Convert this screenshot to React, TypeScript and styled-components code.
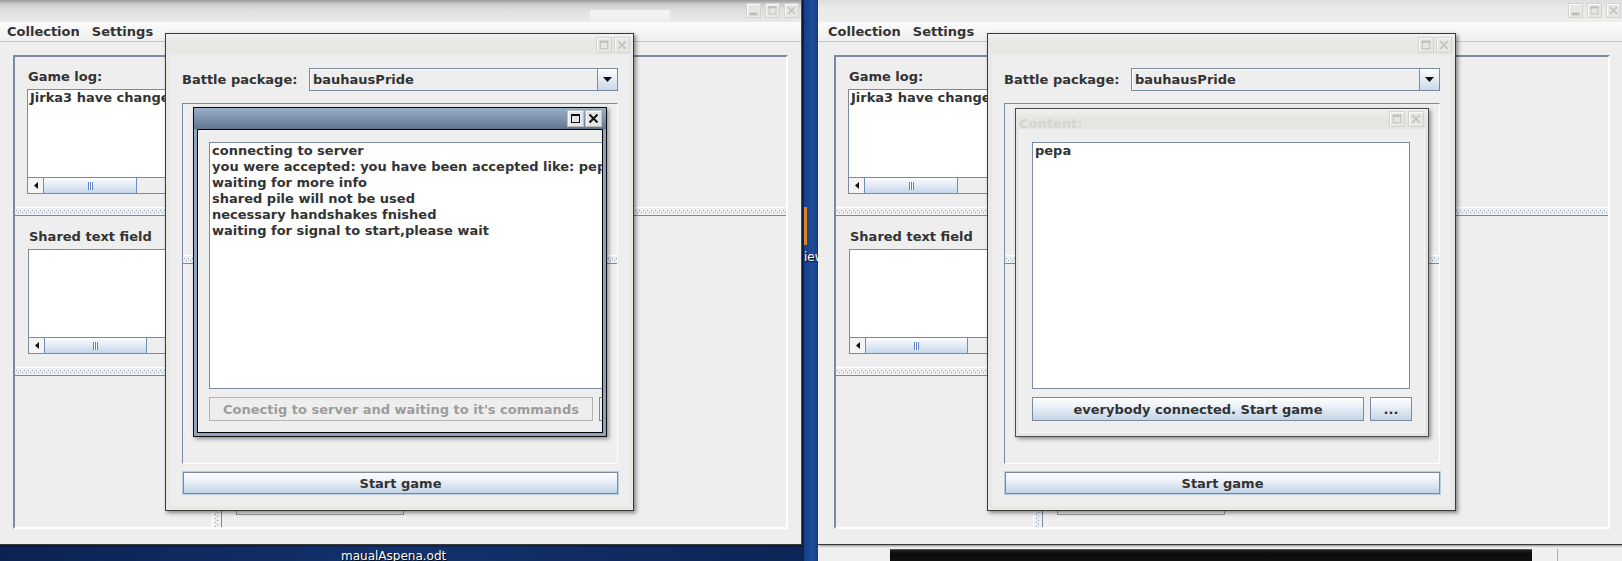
import React from "react";
import styled, { createGlobalStyle } from "styled-components";

const GlobalStyle = createGlobalStyle`
  html, body { margin: 0; padding: 0; }
  body {
    width: 1622px;
    height: 561px;
    overflow: hidden;
    background: #0f2a5e;
    font-family: "DejaVu Sans", "Liberation Sans", sans-serif;
    font-size: 13px;
    font-weight: bold;
    color: #333333;
  }
`;

type Glyph = "min" | "max" | "close";
type Tone = "ghost" | "solid";

const TitleButton: React.FC<{ kind: Glyph; tone: Tone; size: number }> = ({ kind, tone, size }) => {
  const c = tone === "ghost" ? "#bcbcb8" : "#111111";
  return (
    <TitleBtnBox $tone={tone} $size={size}>
      <svg width={size - 2} height={size - 2} viewBox="0 0 15 15">
        {kind === "min" && <rect x="3" y="10" width="9" height="3" fill={c} />}
        {kind === "max" && (
          <>
            <rect x="3.5" y="3.5" width="8" height="8" fill="none" stroke={c} strokeWidth="1" />
            <rect x="3" y="3" width="9" height="2" fill={c} />
          </>
        )}
        {kind === "close" && (
          <path d="M3.5 3.5 L11.5 11.5 M11.5 3.5 L3.5 11.5" stroke={c} strokeWidth={tone === "ghost" ? 1.5 : 2} />
        )}
      </svg>
    </TitleBtnBox>
  );
};

const Scrollbar: React.FC<{ thumb: number }> = ({ thumb }) => (
  <ScrollTrack>
    <ScrollArrow>
      <svg width="4" height="7" viewBox="0 0 4 7">
        <polygon points="4,0 0,3.5 4,7" fill="#111" />
      </svg>
    </ScrollArrow>
    <ScrollThumb style={{ width: thumb }}>
      <Grip />
    </ScrollThumb>
  </ScrollTrack>
);

const BattleDialog: React.FC<{ left: number; children: React.ReactNode }> = ({ left, children }) => (
  <Dialog style={{ left }}>
    <DialogTitle>
      <TitleButton kind="max" tone="ghost" size={16} />
      <TitleButton kind="close" tone="ghost" size={16} />
    </DialogTitle>
    <DialogBody>
      <ComboRow>
        <FieldLabel>Battle package:</FieldLabel>
        <Combo>
          <ComboValue>bauhausPride</ComboValue>
          <ComboArrow>
            <svg width="9" height="5" viewBox="0 0 9 5">
              <polygon points="0,0 9,0 4.5,5" fill="#111" />
            </svg>
          </ComboArrow>
        </Combo>
      </ComboRow>
      <DeskPane>
        <DeskTopPart />
        <HDivider />
        <DeskBottomPart />
        {children}
      </DeskPane>
      <WideButton>Start game</WideButton>
    </DialogBody>
  </Dialog>
);

const AppWindow: React.FC<{
  shift: number;
  width: number;
  tone: "dim" | "light";
  ghostTab?: boolean;
  children: React.ReactNode;
}> = ({ shift, width, tone, ghostTab, children }) => (
  <Window style={{ marginLeft: shift, width }}>
    <TitleBar $tone={tone}>
      {ghostTab && <GhostTab />}
      <TitleButton kind="min" tone="ghost" size={15} />
      <TitleButton kind="max" tone="ghost" size={15} />
      <TitleButton kind="close" tone="ghost" size={15} />
    </TitleBar>
    <MenuBar>
      <MenuItem>Collection</MenuItem>
      <MenuItem>Settings</MenuItem>
    </MenuBar>
    <WindowContent>
      <MainPanel>
        <LeftColumn>
          <LogPane>
            <PaneLabel>Game log:</PaneLabel>
            <TextArea>
              <TextLines>Jirka3 have changed battle package to bauhausPride</TextLines>
              <Scrollbar thumb={94} />
            </TextArea>
          </LogPane>
          <HDivider />
          <SharedPane>
            <PaneLabel>Shared text field</PaneLabel>
            <TextArea>
              <TextLines />
              <Scrollbar thumb={103} />
            </TextArea>
          </SharedPane>
          <HDivider />
          <EmptyPane />
        </LeftColumn>
        <VDivider />
        <RightArea>
          <RightTop />
          <HDivider />
          <RightBottom>
            <BottomBox />
          </RightBottom>
        </RightArea>
      </MainPanel>
    </WindowContent>
    {children}
  </Window>
);

export default function App() {
  return (
    <>
      <GlobalStyle />
      <Page>
        <Screen $width={804}>
          <AppWindow shift={-3} width={805} tone="dim" ghostTab>
            <BattleDialog left={168}>
              <InternalFrame $active style={{ top: 3 }}>
                <FrameTitle $active>
                  <FrameButtons $gap={1}>
                    <TitleButton kind="max" tone="solid" size={17} />
                    <TitleButton kind="close" tone="solid" size={17} />
                  </FrameButtons>
                </FrameTitle>
                <FrameContent $active style={{ padding: "12px 0 0 11px" }}>
                  <FrameText style={{ width: 420 }}>
                    {`connecting to server
you were accepted: you have been accepted like: pepa
waiting for more info
shared pile will not be used
necessary handshakes fnished
waiting for signal to start,please wait`}
                  </FrameText>
                  <ButtonRow>
                    <DisabledButton style={{ width: 384 }}>
                      Conectig to server and waiting to it's commands
                    </DisabledButton>
                    <PlainButton style={{ width: 40 }} />
                  </ButtonRow>
                </FrameContent>
              </InternalFrame>
            </BattleDialog>
          </AppWindow>
          <LeftFloor>
            <FloorLabel>maualAspena.odt</FloorLabel>
          </LeftFloor>
        </Screen>
        <DesktopStrip>
          <OrangeEdge />
          <StripLabel>iew</StripLabel>
        </DesktopStrip>
        <Screen $width={804}>
          <AppWindow shift={0} width={806} tone="light">
            <BattleDialog left={169}>
              <InternalFrame $active={false} style={{ top: 4, height: 329 }}>
                <FrameTitle $active={false}>
                  <GhostCaption>Content:</GhostCaption>
                  <FrameButtons $gap={3}>
                    <TitleButton kind="max" tone="ghost" size={16} />
                    <TitleButton kind="close" tone="ghost" size={16} />
                  </FrameButtons>
                </FrameTitle>
                <FrameContent $active={false} style={{ padding: "11px 0 0 12px" }}>
                  <FrameText style={{ width: 378 }}>pepa</FrameText>
                  <ButtonRow>
                    <GradientButton style={{ width: 332 }}>everybody connected. Start game</GradientButton>
                    <GradientButton style={{ width: 42 }}>...</GradientButton>
                  </ButtonRow>
                </FrameContent>
              </InternalFrame>
            </BattleDialog>
          </AppWindow>
          <RightFloor>
            <DarkBand />
            <FloorLine />
          </RightFloor>
        </Screen>
      </Page>
    </>
  );
}

const Page = styled.div`
  display: flex;
  width: 1622px;
  height: 561px;
  overflow: hidden;
`;

const Screen = styled.div<{ $width: number }>`
  flex: none;
  width: ${p => p.$width}px;
  height: 561px;
  overflow: hidden;
  display: flex;
  flex-direction: column;
`;

const Window = styled.div`
  position: relative;
  flex: none;
  height: 545px;
  box-sizing: border-box;
  display: flex;
  flex-direction: column;
  background: #eeeeee;
  border-right: 1px solid #4a4a4a;
  border-bottom: 1px solid #3a3a3a;
  box-shadow: 1px 1px 2px rgba(0, 0, 0, 0.45);
`;

const TitleBar = styled.div<{ $tone: "dim" | "light" }>`
  flex: none;
  height: 22px;
  box-sizing: border-box;
  display: flex;
  align-items: flex-start;
  justify-content: flex-end;
  gap: 4px;
  padding: 3px 2px 0 0;
  background: ${p =>
    p.$tone === "dim"
      ? "linear-gradient(#9a9a9a 0px, #cbcbcb 4px, #e0e0e0 10px, #e9e9e9 22px)"
      : "linear-gradient(#dedede 0px, #e9e9e7 8px, #eeeeec 22px)"};
`;

const GhostTab = styled.div`
  align-self: flex-end;
  width: 80px;
  height: 12px;
  margin-right: 72px;
  background: linear-gradient(#f4f4f4, #ededed);
  border-radius: 2px 2px 0 0;
`;

const TitleBtnBox = styled.span<{ $tone: Tone; $size: number }>`
  flex: none;
  width: ${p => p.$size}px;
  height: ${p => p.$size}px;
  box-sizing: border-box;
  display: flex;
  align-items: center;
  justify-content: center;
  background: ${p => (p.$tone === "ghost" ? "#e6e6e2" : "#e4e6e9")};
  border: 1px solid ${p => (p.$tone === "ghost" ? "#d2d2ce" : "#b9bec5")};
  box-shadow: inset 1px 1px 0 #fafafa;
`;

const MenuBar = styled.div`
  flex: none;
  height: 20px;
  box-sizing: border-box;
  display: flex;
  align-items: center;
  padding-left: 4px;
  background: linear-gradient(#fbfbfb, #efefef);
  border-bottom: 1px solid #c6c6c6;
`;

const MenuItem = styled.span`
  padding: 0 6px;
  line-height: 16px;
`;

const WindowContent = styled.div`
  flex: 1;
  display: flex;
  padding: 13px 13px 15px 16px;
  min-height: 0;
`;

const MainPanel = styled.div`
  flex: 1;
  display: flex;
  border-style: solid;
  border-width: 2px;
  border-color: #7a8aa0 #ffffff #ffffff #7a8aa0;
`;

const LeftColumn = styled.div`
  flex: none;
  width: 198px;
  box-sizing: border-box;
  display: flex;
  flex-direction: column;
  border-right: 1px solid #ffffff;
`;

const LogPane = styled.div`
  flex: none;
  height: 150px;
  box-sizing: border-box;
  padding: 12px 0 0 12px;
  display: flex;
  flex-direction: column;
`;

const SharedPane = styled.div`
  flex: none;
  height: 152px;
  box-sizing: border-box;
  border-top: 1px solid #7a8aa0;
  padding: 13px 0 0 13px;
  display: flex;
  flex-direction: column;
`;

const EmptyPane = styled.div`
  flex: 1;
  border-top: 1px solid #7a8aa0;
`;

const PaneLabel = styled.div`
  line-height: 16px;
  height: 16px;
  margin: 0 0 4px 1px;
  white-space: nowrap;
`;

const TextArea = styled.div`
  width: 178px;
  height: 105px;
  box-sizing: border-box;
  display: flex;
  flex-direction: column;
  background: #ffffff;
  border: 1px solid #7a8aa0;
`;

const TextLines = styled.div`
  flex: 1;
  padding: 0 2px;
  line-height: 16px;
  white-space: pre;
  overflow: hidden;
`;

const ScrollTrack = styled.div`
  flex: none;
  height: 16px;
  box-sizing: border-box;
  display: flex;
  background: #eeeeee;
  border-top: 1px solid #7a8aa0;
`;

const ScrollArrow = styled.div`
  flex: none;
  width: 15px;
  display: flex;
  align-items: center;
  justify-content: center;
  background: #f4f4f4;
`;

const ScrollThumb = styled.div`
  flex: none;
  box-sizing: border-box;
  display: flex;
  align-items: center;
  justify-content: center;
  border-left: 1px solid #6f8cba;
  border-right: 1px solid #6f8cba;
  background: linear-gradient(#fbfcfe, #e4ecf6 45%, #c6d7ec);
`;

const Grip = styled.span`
  width: 5px;
  height: 8px;
  background: repeating-linear-gradient(90deg, #5f82c2 0 1px, #ffffff 1px 2px);
`;

const HDivider = styled.div`
  flex: none;
  height: 8px;
  box-sizing: border-box;
  border-top: 1px solid #ffffff;
  background:
    repeating-linear-gradient(90deg, #8c9cb2 0 1px, transparent 1px 4px) 1px 2px / 100% 1px no-repeat,
    repeating-linear-gradient(90deg, #8c9cb2 0 1px, transparent 1px 4px) 3px 4px / 100% 1px no-repeat,
    #eeeeee;
`;

const VDivider = styled.div`
  flex: none;
  width: 8px;
  background:
    repeating-linear-gradient(180deg, #8c9cb2 0 1px, transparent 1px 4px) 2px 1px / 1px 100% no-repeat,
    repeating-linear-gradient(180deg, #8c9cb2 0 1px, transparent 1px 4px) 4px 3px / 1px 100% no-repeat,
    #eeeeee;
`;

const RightArea = styled.div`
  flex: 1;
  display: flex;
  flex-direction: column;
  border-left: 1px solid #7a8aa0;
`;

const RightTop = styled.div`
  flex: none;
  height: 150px;
`;

const RightBottom = styled.div`
  flex: 1;
  display: flex;
  flex-direction: column;
  justify-content: flex-end;
  border-top: 1px solid #7a8aa0;
`;

const BottomBox = styled.div`
  width: 168px;
  height: 26px;
  margin: 0 0 12px 14px;
  box-sizing: border-box;
  border: 1px solid #9a9a9a;
`;

const Dialog = styled.div`
  position: absolute;
  top: 33px;
  width: 469px;
  height: 478px;
  box-sizing: border-box;
  display: flex;
  flex-direction: column;
  padding: 0 4px 4px;
  background: #e8e8e4;
  border: 1px solid #3a3a3a;
  box-shadow: 2px 2px 4px rgba(0, 0, 0, 0.45);
`;

const DialogTitle = styled.div`
  flex: none;
  height: 21px;
  margin: 0 -4px;
  box-sizing: border-box;
  display: flex;
  align-items: flex-start;
  justify-content: flex-end;
  gap: 2px;
  padding: 3px 3px 0 0;
  background: linear-gradient(#f1f1ef, #e6e6e2 45%, #e8e8e4);
`;

const DialogBody = styled.div`
  flex: 1;
  display: flex;
  flex-direction: column;
  padding: 13px 11px 0 12px;
  background: #eeeeee;
`;

const ComboRow = styled.div`
  flex: none;
  height: 23px;
  display: flex;
  align-items: center;
`;

const FieldLabel = styled.span`
  flex: none;
  width: 127px;
  white-space: nowrap;
`;

const Combo = styled.div`
  flex: 1;
  height: 23px;
  box-sizing: border-box;
  display: flex;
  border: 1px solid #7a8aa0;
  background: #eeeeee;
  box-shadow: inset 1px 1px 0 #ffffff;
`;

const ComboValue = styled.div`
  flex: 1;
  display: flex;
  align-items: center;
  padding-left: 3px;
`;

const ComboArrow = styled.div`
  flex: none;
  width: 19px;
  display: flex;
  align-items: center;
  justify-content: center;
  border-left: 1px solid #7a8aa0;
  background: linear-gradient(#fbfdff, #e2eaf4 55%, #c9d8e9);
`;

const DeskPane = styled.div`
  position: relative;
  flex: none;
  height: 361px;
  margin-top: 12px;
  box-sizing: border-box;
  display: flex;
  flex-direction: column;
  border-style: solid;
  border-width: 1px;
  border-color: #7a8aa0 #ffffff #ffffff #7a8aa0;
`;

const DeskTopPart = styled.div`
  flex: none;
  height: 151px;
`;

const DeskBottomPart = styled.div`
  flex: 1;
  border-top: 1px solid #7a8aa0;
`;

const WideButton = styled.button`
  flex: none;
  height: 22px;
  margin: 8px 0 0 1px;
  padding: 0;
  font: inherit;
  color: #333333;
  border: 1px solid #7a8aa0;
  box-shadow: 0 0 0 1px #b9cce0;
  background: linear-gradient(#fdfeff, #eef3f9 35%, #d6e2ef 70%, #c4d5e8);
`;

const InternalFrame = styled.div<{ $active: boolean }>`
  position: absolute;
  left: 10px;
  width: 414px;
  height: 330px;
  box-sizing: border-box;
  display: flex;
  flex-direction: column;
  padding: 0 3px 3px;
  background: ${p => (p.$active ? "#8fa3bc" : "#e4e4e0")};
  border: 1px solid ${p => (p.$active ? "#0e0e0e" : "#4c4c4c")};
  box-shadow: 2px 2px 4px rgba(0, 0, 0, 0.4);
`;

const FrameTitle = styled.div<{ $active: boolean }>`
  flex: none;
  height: 21px;
  margin: 0 -3px;
  box-sizing: border-box;
  display: flex;
  align-items: flex-start;
  overflow: hidden;
  background: ${p =>
    p.$active
      ? "linear-gradient(#98adc5, #7d93ae 50%, #62778f)"
      : "linear-gradient(#f0f0ee, #e4e4e0 50%, #e6e6e2)"};
`;

const GhostCaption = styled.span`
  padding: 7px 0 0 3px;
  line-height: 16px;
  color: #d4d4d0;
  white-space: nowrap;
`;

const FrameButtons = styled.div<{ $gap: number }>`
  margin-left: auto;
  display: flex;
  gap: ${p => p.$gap}px;
  padding: 2px 4px 0 0;
`;

const FrameContent = styled.div<{ $active: boolean }>`
  flex: 1;
  min-height: 0;
  display: flex;
  flex-direction: column;
  overflow: hidden;
  background: #eeeeee;
  border: 1px solid ${p => (p.$active ? "#000000" : "#f6f6f4")};
`;

const FrameText = styled.div`
  flex: none;
  height: 247px;
  box-sizing: border-box;
  padding: 0 2px;
  line-height: 16px;
  white-space: pre;
  overflow: hidden;
  background: #ffffff;
  border: 1px solid #7a8aa0;
`;

const ButtonRow = styled.div`
  flex: none;
  height: 24px;
  margin-top: 8px;
  display: flex;
  gap: 6px;
`;

const ButtonBase = styled.button`
  flex: none;
  height: 24px;
  padding: 0;
  font: inherit;
  white-space: nowrap;
  overflow: hidden;
`;

const DisabledButton = styled(ButtonBase)`
  color: #9c9c9c;
  background: #eeeeee;
  border: 1px solid #b4b4b4;
`;

const PlainButton = styled(ButtonBase)`
  background: #eeeeee;
  border: 1px solid #7a8aa0;
`;

const GradientButton = styled(ButtonBase)`
  color: #333333;
  border: 1px solid #7a8aa0;
  background: linear-gradient(#fdfeff, #eef3f9 35%, #d6e2ef 70%, #c4d5e8);
`;

const LeftFloor = styled.div`
  flex: 1;
  background: linear-gradient(90deg, #0c2252, #14326e 50%, #0d2556);
`;

const FloorLabel = styled.div`
  padding: 3px 0 0 341px;
  font-size: 12px;
  font-weight: normal;
  line-height: 16px;
  color: #ffffff;
  text-shadow: 1px 1px 1px #000;
  white-space: nowrap;
`;

const RightFloor = styled.div`
  flex: 1;
  display: flex;
  align-items: flex-end;
  background: #f0f0f0;
`;

const DarkBand = styled.div`
  width: 642px;
  height: 12px;
  margin-left: 72px;
  background:
    linear-gradient(#2a2a2a, #0c0c0c 40%, #111111),
    #111111;
  box-shadow: inset 0 1px 0 #555555;
`;

const FloorLine = styled.div`
  width: 1px;
  height: 12px;
  margin-left: 25px;
  background: #b0b0b0;
`;

const DesktopStrip = styled.div`
  flex: none;
  width: 14px;
  height: 561px;
  overflow: hidden;
  display: flex;
  flex-direction: column;
  background: linear-gradient(90deg, #173f86, #1d4d9b 60%, #163c80);
`;

const OrangeEdge = styled.div`
  width: 3px;
  height: 38px;
  margin-top: 207px;
  background: #d9862a;
`;

const StripLabel = styled.div`
  margin-top: 5px;
  font-size: 12px;
  font-weight: normal;
  line-height: 14px;
  color: #ffffff;
  white-space: nowrap;
  text-shadow: 1px 1px 1px #000;
`;
